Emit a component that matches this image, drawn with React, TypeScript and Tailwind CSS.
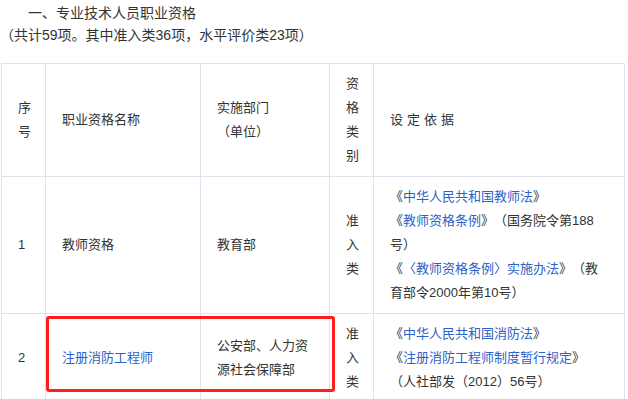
import React from "react";

const Link = ({ children }: { children: React.ReactNode }) => (
  <a className="text-[#2d62c8] no-underline">{children}</a>
);

const cell =
  "border border-[#e1e1ee] pl-[16px] pr-[16px] py-[8px] align-middle text-left";

export default function App() {
  return (
    <div
      className="w-[628px] h-[399px] overflow-hidden bg-white text-[#333333] [text-spacing-trim:space-all]"
      style={{ fontFamily: '"Liberation Sans", "Noto Sans CJK SC", sans-serif' }}
    >
      <div className="pt-[2px] text-[14px] leading-[22px]">
        <p className="pl-[28px]">一、专业技术人员职业资格</p>
        <p>（共计59项。其中准入类36项，水平评价类23项）</p>
      </div>

      <div className="relative mt-[17px] ml-[1px]">
        <table className="table-fixed border-collapse w-[623px] text-[13px] leading-[24px]">
          <colgroup>
            <col className="w-[44px]" />
            <col className="w-[155px]" />
            <col className="w-[129px]" />
            <col className="w-[44px]" />
            <col className="w-[251px]" />
          </colgroup>
          <tbody>
            <tr>
              <td className={cell}>序号</td>
              <td className={cell}>职业资格名称</td>
              <td className={cell}>
                实施部门
                <br />
                （单位）
              </td>
              <td className={cell}>资格类别</td>
              <td className={cell}>
                <span className="tracking-[4px]">设定依据</span>
              </td>
            </tr>
            <tr>
              <td className={cell}>1</td>
              <td className={cell}>教师资格</td>
              <td className={cell}>教育部</td>
              <td className={cell}>准入类</td>
              <td className={`${cell} pr-[20px]`}>
                <p>
                  《<Link>中华人民共和国教师法</Link>》
                </p>
                <p>
                  《<Link>教师资格条例</Link>》（国务院令第188号）
                </p>
                <p>
                  《<Link>〈教师资格条例〉实施办法</Link>》（教育部令2000年第10号）
                </p>
              </td>
            </tr>
            <tr>
              <td className={cell}>2</td>
              <td className={cell}>
                <Link>注册消防工程师</Link>
              </td>
              <td className={cell}>公安部、人力资源社会保障部</td>
              <td className={cell}>准入类</td>
              <td className={`${cell} pr-[20px]`}>
                <p>
                  《<Link>中华人民共和国消防法</Link>》
                </p>
                <p>
                  《<Link>注册消防工程师制度暂行规定</Link>》
                </p>
                <p>（人社部发（2012）56号）</p>
              </td>
            </tr>
          </tbody>
        </table>

        {/* red highlight annotation */}
        <div className="absolute left-[45px] top-[253px] w-[289px] h-[76px] border-[3px] border-[#ff1d1d] rounded-[3px] pointer-events-none" />
      </div>
    </div>
  );
}
